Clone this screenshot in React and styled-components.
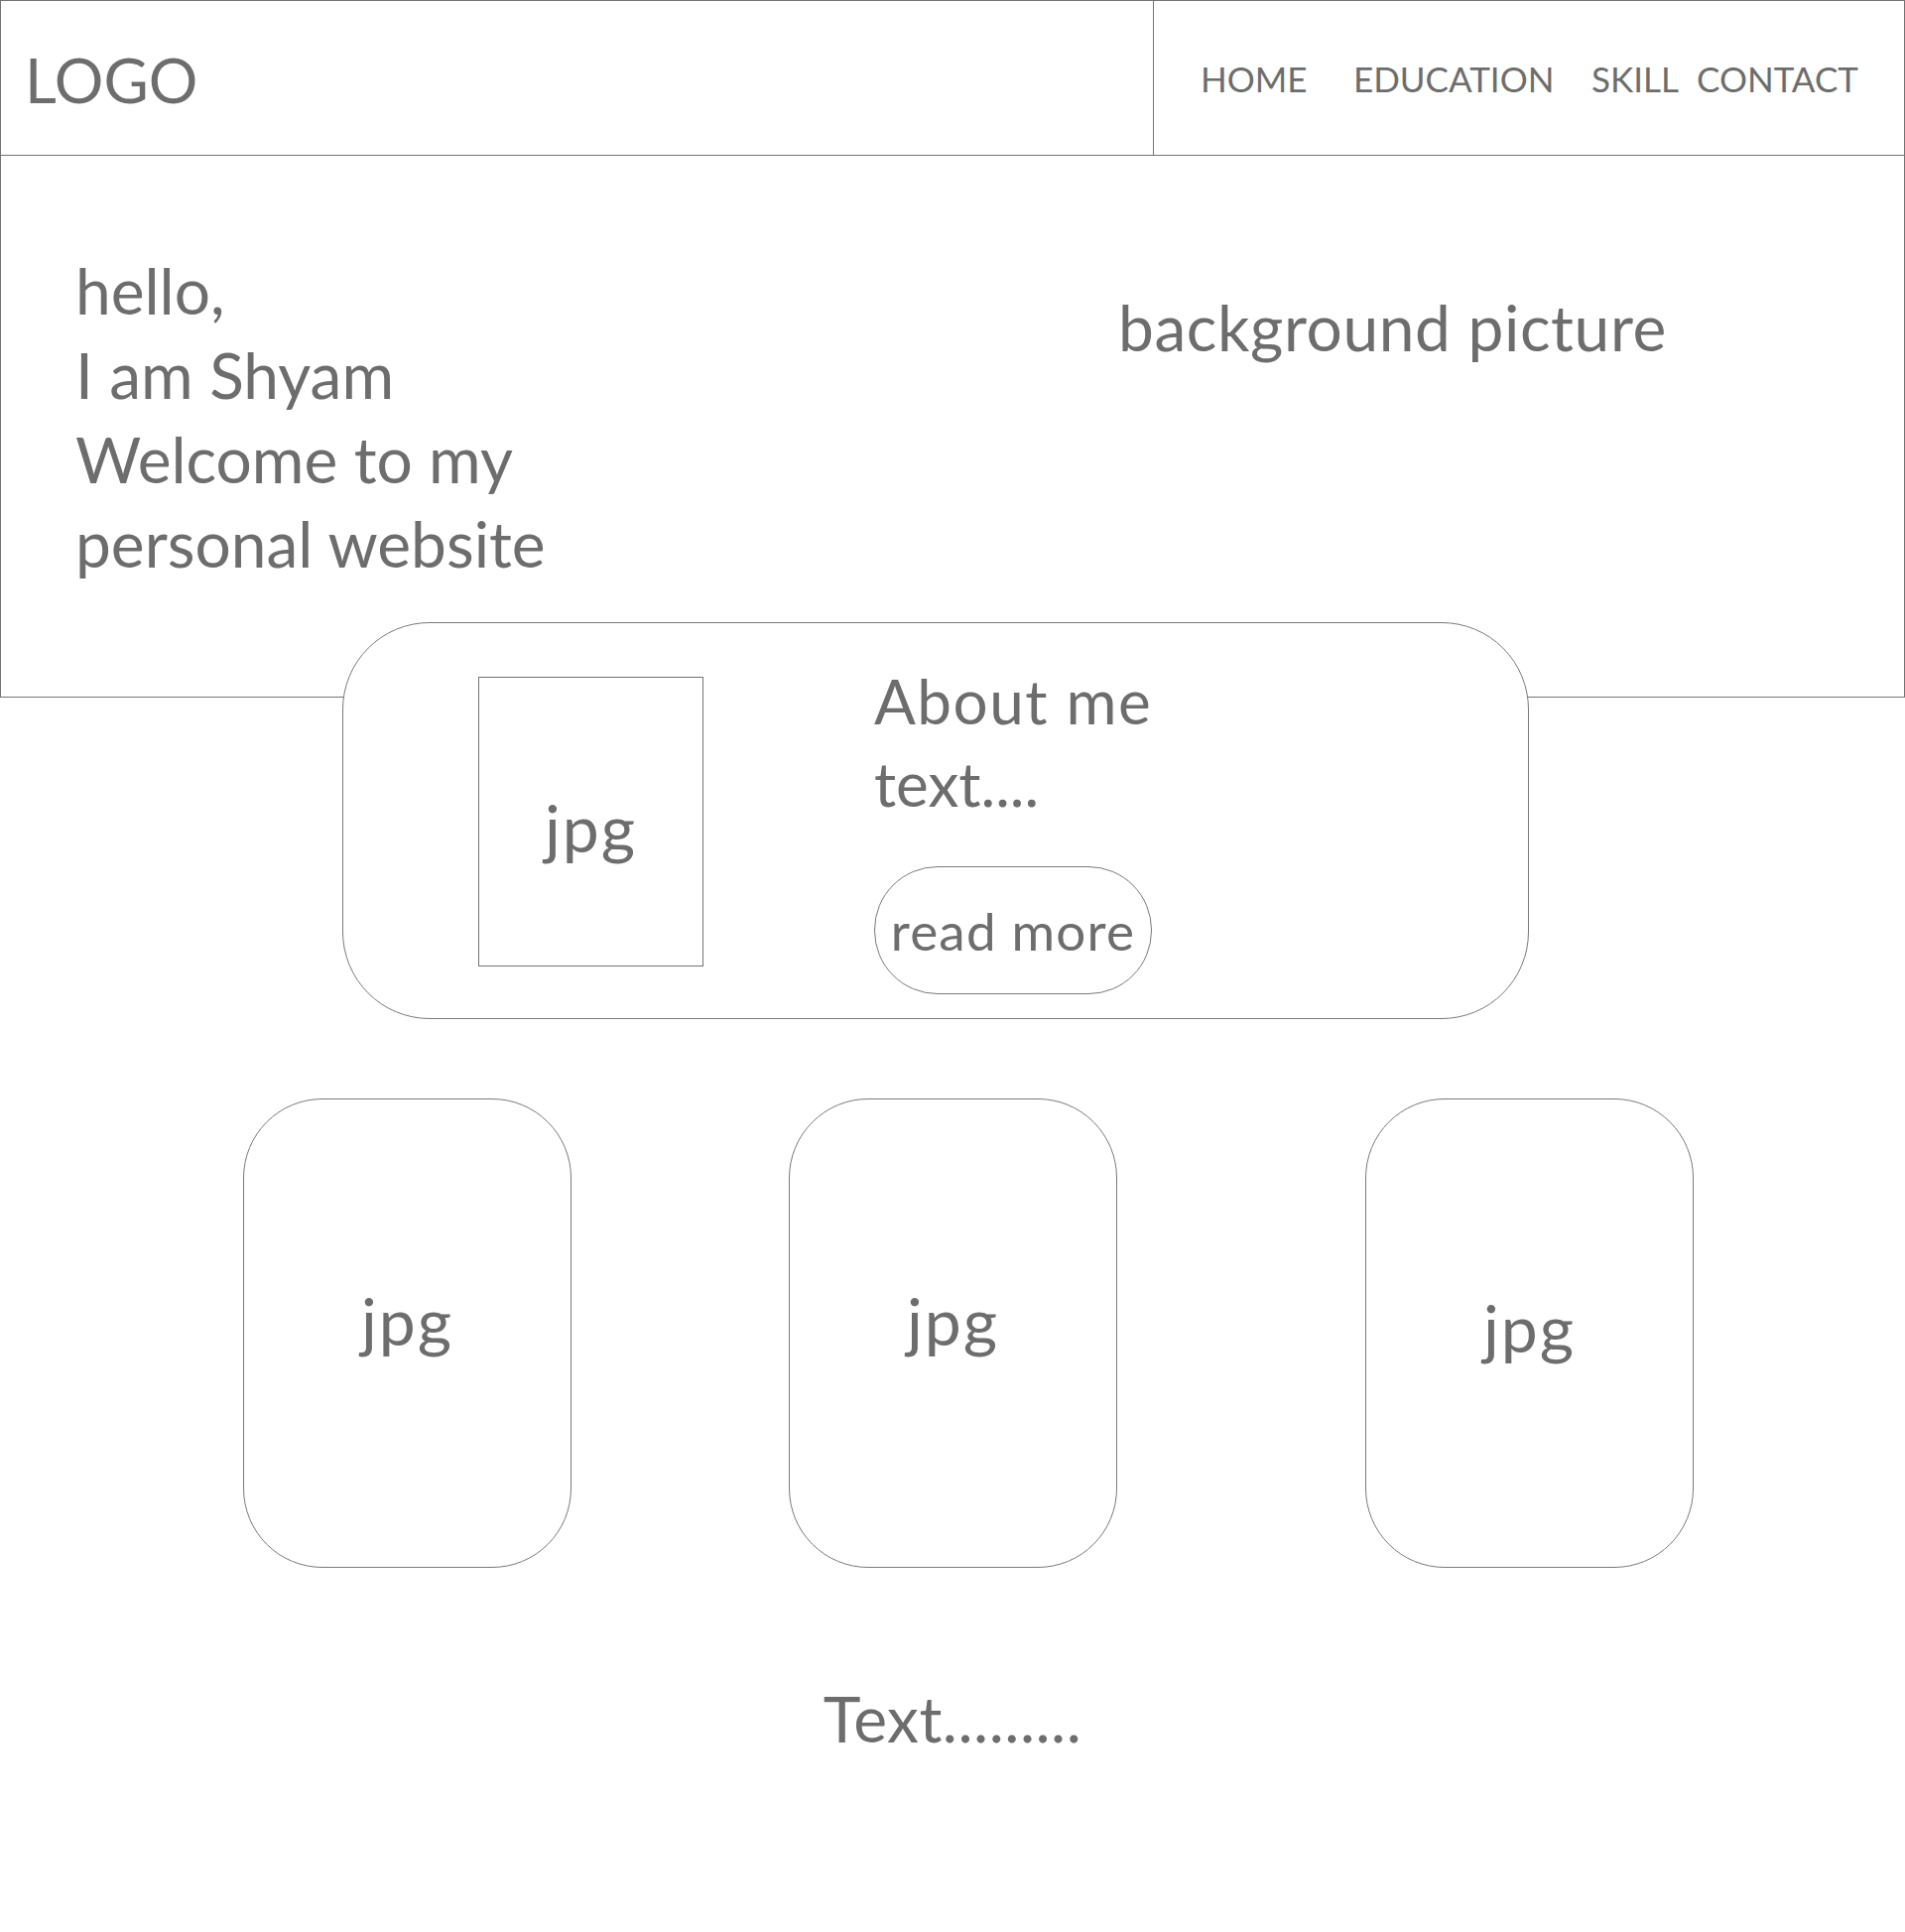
import React from "react";
import styled, { createGlobalStyle } from "styled-components";

const INK = "#6d6d6d";
const LINE = "#737373";
const SOFT = "#7a7a7a";

const GlobalStyle = createGlobalStyle`
  html, body { margin: 0; padding: 0; background: #ffffff; }
  body { font-family: Lato, "Open Sans", "Noto Sans", sans-serif; color: ${INK}; }
  * { box-sizing: border-box; }
`;

const Page = styled.div`
  width: 1920px;
  min-height: 1947px;
  background: #ffffff;
`;

const Header = styled.header`
  display: flex;
  height: 157px;
  border: 1px solid ${LINE};
`;

const LogoCell = styled.div`
  width: 1162px;
  display: flex;
  align-items: center;
  padding: 4px 0 0 24px;
  border-right: 1px solid ${LINE};
`;

const Logo = styled.div`
  font-size: 62px;
  line-height: 1.2;
`;

const Nav = styled.nav`
  flex: 1;
  display: flex;
  align-items: center;
  padding-left: 47px;
`;

const NavItem = styled.a`
  display: block;
  width: ${(p) => p.$w}px;
  flex: none;
  font-size: 35px;
  line-height: 1.2;
  color: ${INK};
  text-decoration: none;
  white-space: nowrap;
`;

const Hero = styled.section`
  display: grid;
  grid-template-columns: 1051px 1fr;
  align-items: start;
  height: 546px;
  padding: 93px 0 0 75px;
  border: 1px solid ${LINE};
  border-top: none;
`;

const Greeting = styled.h1`
  margin: 0;
  font-weight: 400;
  font-size: 64px;
  line-height: 85px;
`;

const BgLabel = styled.div`
  margin-top: 37px;
  font-size: 64px;
  line-height: 85px;
  letter-spacing: 0.6px;
`;

const AboutCard = styled.section`
  position: relative;
  z-index: 1;
  display: flex;
  align-items: flex-start;
  width: 1196px;
  height: 400px;
  margin: -76px 0 0 345px;
  border: 1px solid ${SOFT};
  border-radius: 88px;
  background: #ffffff;
`;

const Photo = styled.div`
  display: flex;
  align-items: center;
  justify-content: center;
  width: 227px;
  height: 292px;
  margin: 54px 0 0 136px;
  padding-top: 10px;
  border: 1px solid ${LINE};
  font-size: 66px;
  letter-spacing: 2px;
`;

const AboutText = styled.div`
  display: flex;
  flex-direction: column;
  align-items: flex-start;
  margin: 37px 0 0 172px;
`;

const AboutLine = styled.p`
  margin: 0;
  font-size: 62px;
  line-height: 83px;
  letter-spacing: ${(p) => p.$track || 0}px;
`;

const ReadMore = styled.button`
  display: flex;
  align-items: center;
  justify-content: center;
  width: 280px;
  height: 129px;
  margin-top: 42px;
  padding: 0;
  border: 1px solid ${SOFT};
  border-radius: 64px;
  background: #ffffff;
  color: ${INK};
  font-family: inherit;
  font-size: 53px;
  line-height: 1.2;
  letter-spacing: 1.2px;
`;

const Gallery = styled.section`
  display: flex;
  margin-top: 80px;
  padding-left: 245px;
`;

const Tile = styled.div`
  display: flex;
  align-items: center;
  justify-content: center;
  flex: none;
  width: 331px;
  height: 473px;
  margin-left: ${(p) => p.$gap}px;
  padding-bottom: ${(p) => p.$lift}px;
  border: 1px solid ${SOFT};
  border-radius: 80px;
  font-size: 66px;
  letter-spacing: 2px;
`;

const Footer = styled.footer`
  margin-top: 114px;
  text-align: center;
  font-size: 64px;
  line-height: 1.2;
  letter-spacing: 0.5px;
`;

const navItems = [
  { label: "HOME", w: 154 },
  { label: "EDUCATION", w: 240 },
  { label: "SKILL", w: 106 },
  { label: "CONTACT", w: 200 },
];

const tiles = [
  { gap: 0, lift: 26 },
  { gap: 219, lift: 26 },
  { gap: 250, lift: 12 },
];

export default function App() {
  return (
    <Page>
      <GlobalStyle />
      <Header>
        <LogoCell>
          <Logo>LOGO</Logo>
        </LogoCell>
        <Nav>
          {navItems.map((n) => (
            <NavItem key={n.label} $w={n.w} href="#">
              {n.label}
            </NavItem>
          ))}
        </Nav>
      </Header>
      <Hero>
        <Greeting>
          hello,
          <br />I am Shyam
          <br />
          Welcome to my
          <br />
          personal website
        </Greeting>
        <BgLabel>background picture</BgLabel>
      </Hero>
      <AboutCard>
        <Photo>jpg</Photo>
        <AboutText>
          <AboutLine $track={1.5}>About me</AboutLine>
          <AboutLine>text....</AboutLine>
          <ReadMore type="button">read more</ReadMore>
        </AboutText>
      </AboutCard>
      <Gallery>
        {tiles.map((t, i) => (
          <Tile key={i} $gap={t.gap} $lift={t.lift}>
            jpg
          </Tile>
        ))}
      </Gallery>
      <Footer>Text.........</Footer>
    </Page>
  );
}
